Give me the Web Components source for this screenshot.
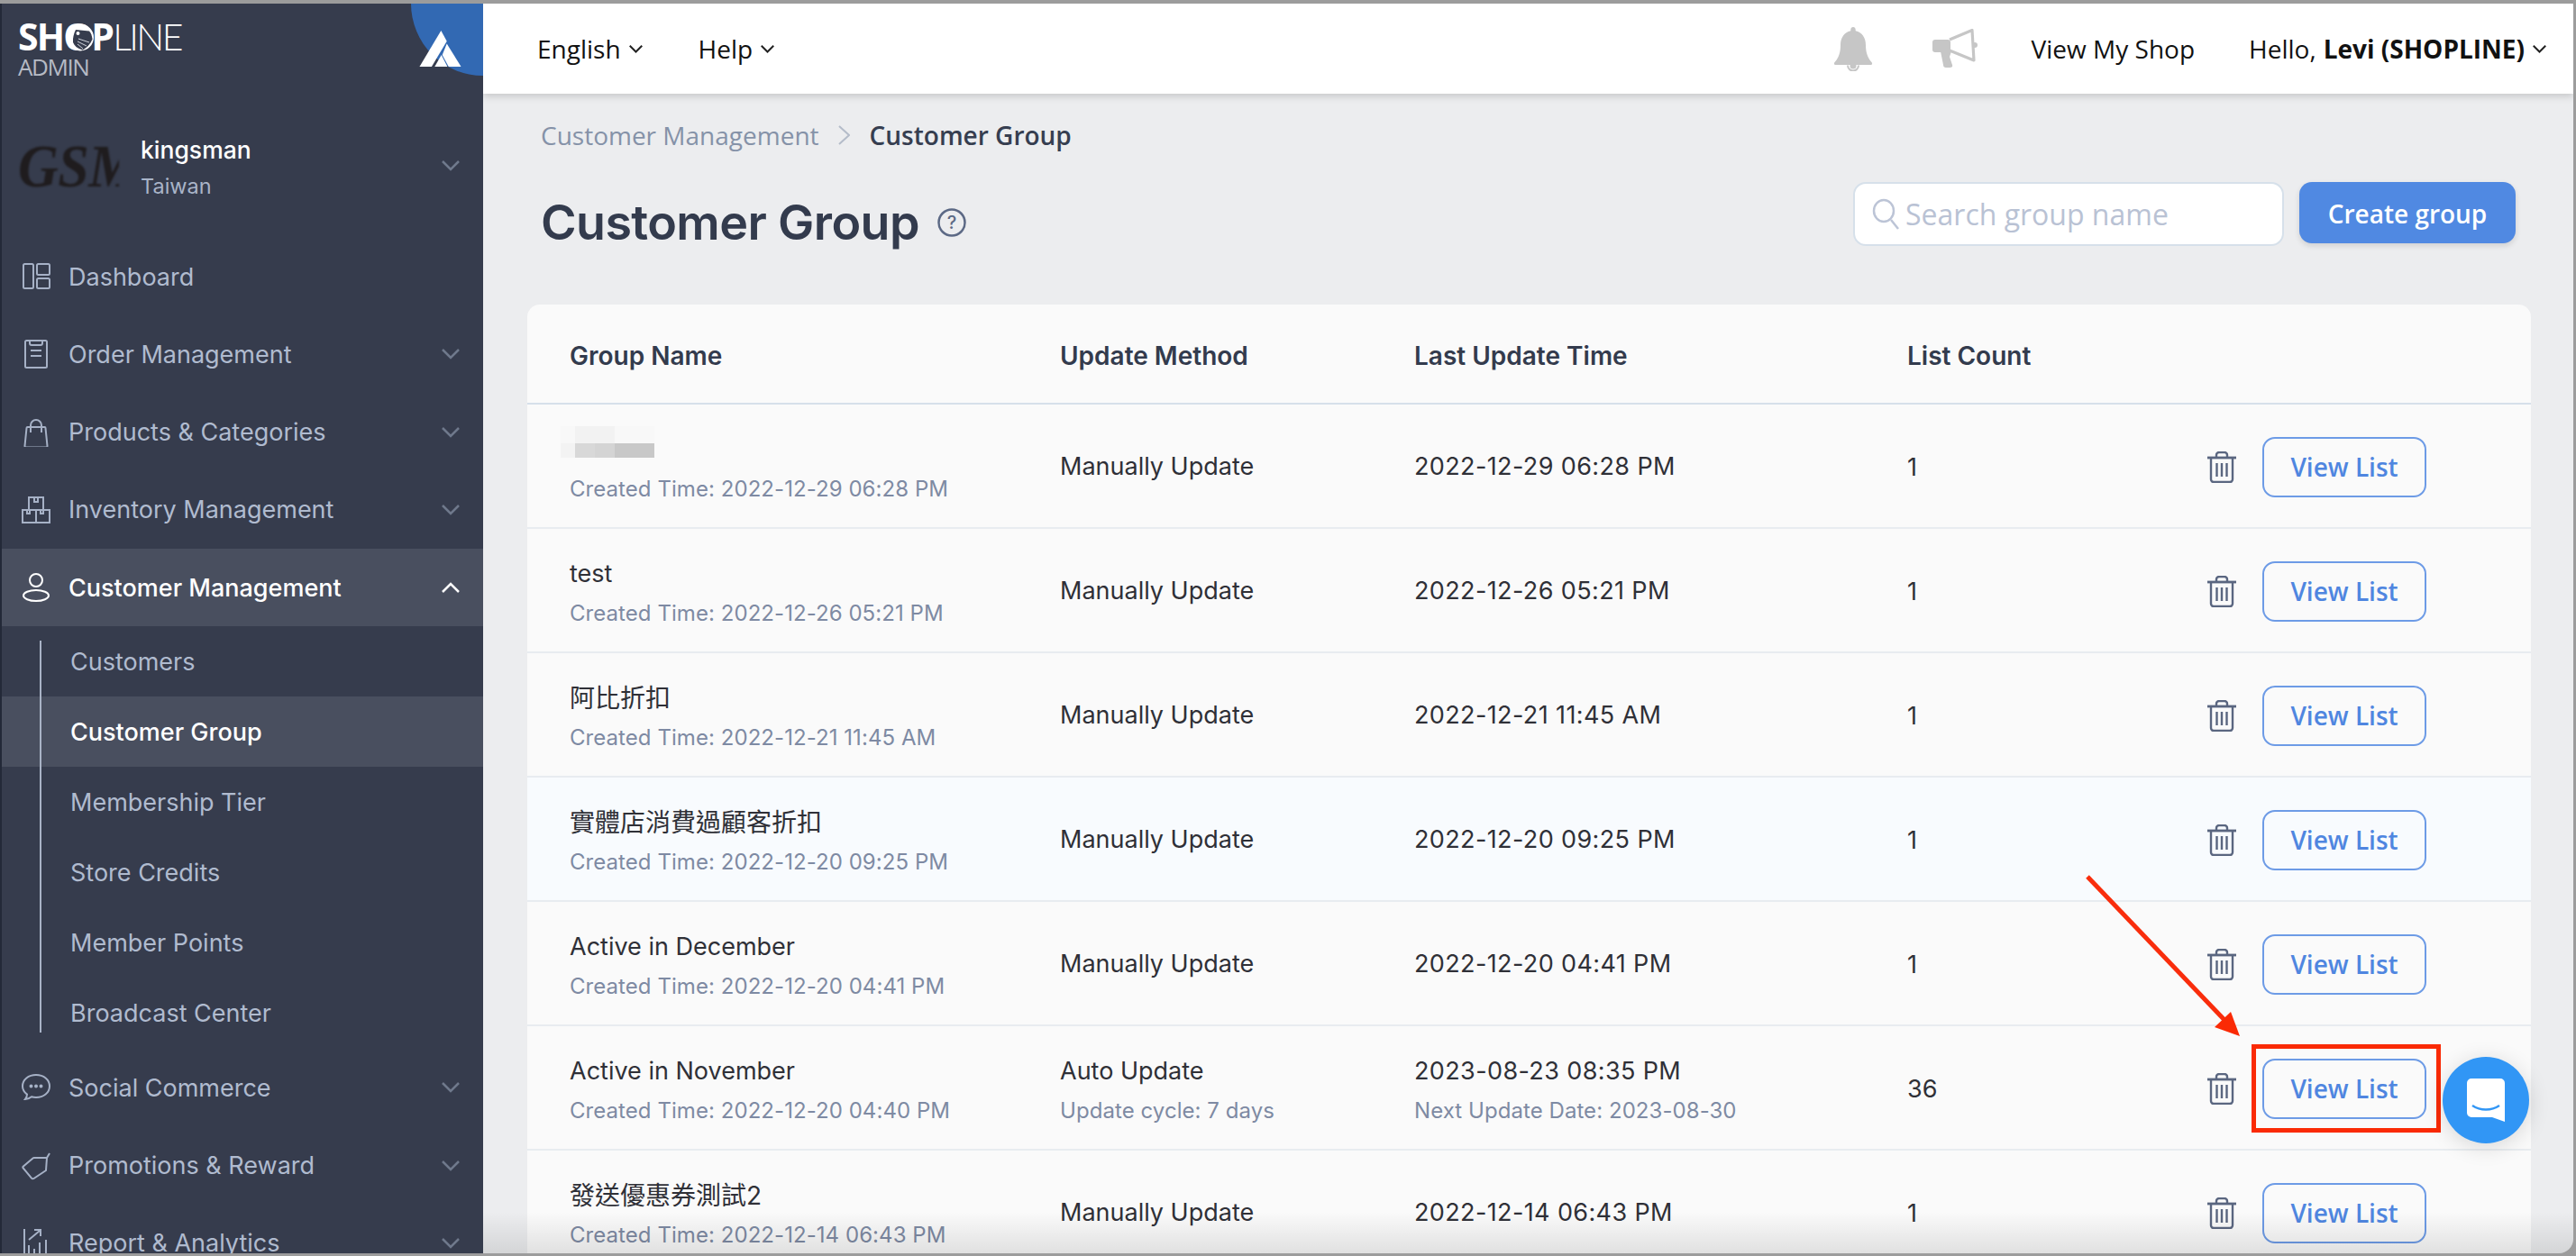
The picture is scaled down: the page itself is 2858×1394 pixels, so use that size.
<!DOCTYPE html>
<html lang="en">
<head>
<meta charset="utf-8">
<title>Customer Group</title>
<style>
  html,body{margin:0;padding:0;width:2858px;height:1394px;overflow:hidden;background:#9a9a9a;}
</style>
</head>
<body>
<app-shell>
  <side-bar slot="side">
    <side-item icon="dashboard" nochev>Dashboard</side-item>
    <side-item icon="order">Order Management</side-item>
    <side-item icon="bag">Products &amp; Categories</side-item>
    <side-item icon="box">Inventory Management</side-item>
    <side-item icon="user" open>Customer Management</side-item>
    <sub-menu>
      <sub-item>Customers</sub-item>
      <sub-item active>Customer Group</sub-item>
      <sub-item>Membership Tier</sub-item>
      <sub-item>Store Credits</sub-item>
      <sub-item>Member Points</sub-item>
      <sub-item>Broadcast Center</sub-item>
    </sub-menu>
    <side-item icon="chat">Social Commerce</side-item>
    <side-item icon="tag">Promotions &amp; Reward</side-item>
    <side-item icon="report">Report &amp; Analytics</side-item>
  </side-bar>
  <top-bar slot="top"></top-bar>
  <page-head slot="main"></page-head>
  <group-table slot="main">
    <group-row blur created="Created Time: 2022-12-29 06:28 PM" method="Manually Update" time="2022-12-29 06:28 PM" count="1"></group-row>
    <group-row name="test" created="Created Time: 2022-12-26 05:21 PM" method="Manually Update" time="2022-12-26 05:21 PM" count="1"></group-row>
    <group-row name="阿比折扣" created="Created Time: 2022-12-21 11:45 AM" method="Manually Update" time="2022-12-21 11:45 AM" count="1"></group-row>
    <group-row hl name="實體店消費過顧客折扣" created="Created Time: 2022-12-20 09:25 PM" method="Manually Update" time="2022-12-20 09:25 PM" count="1"></group-row>
    <group-row name="Active in December" created="Created Time: 2022-12-20 04:41 PM" method="Manually Update" time="2022-12-20 04:41 PM" count="1"></group-row>
    <group-row name="Active in November" created="Created Time: 2022-12-20 04:40 PM" method="Auto Update" cycle="Update cycle: 7 days" time="2023-08-23 08:35 PM" next="Next Update Date: 2023-08-30" count="36"></group-row>
    <group-row name="發送優惠券測試2" created="Created Time: 2022-12-14 06:43 PM" method="Manually Update" time="2022-12-14 06:43 PM" count="1"></group-row>
  </group-table>
  <red-callout slot="over"></red-callout>
  <chat-fab slot="over"></chat-fab>
</app-shell>

<script>
const ICONS = {
  dashboard:'<rect x="2" y="2" width="11" height="27" rx="1.5"/><rect x="17" y="2" width="14" height="12" rx="1.5"/><rect x="17" y="18" width="14" height="11" rx="1.5"/>',
  order:'<rect x="4" y="1" width="24" height="30" rx="1.5"/><path d="M9 1v3a2 2 0 0 0 2 2h10a2 2 0 0 0 2-2V1M10 12h12M10 18h12"/>',
  bag:'<path d="M7 10h18.5a1 1 0 0 1 1 1l2 20a1.5 1.5 0 0 1-1.5 1.6H5a1.5 1.5 0 0 1-1.5-1.6l2-20a1 1 0 0 1 1-1z"/><path d="M10 16V8a6 6 0 0 1 12 0v8"/>',
  box:'<rect x="8" y="2" width="16" height="14"/><rect x="1" y="16" width="15" height="14"/><rect x="16" y="16" width="15" height="14"/><path d="M14 2v5h4V2M6 16v4h3v-4M21 16v4h3v-4" />',
  user:'<circle cx="16" cy="8" r="7"/><ellipse cx="16" cy="25" rx="14" ry="6"/>',
  chat:'<path d="M16 2c8.3 0 15 5 15 12.5S24.300 27 16 27c-1.700 0-3.400-.2-5-.7C9 28 6.500 29 4 29c1.300-1.600 2-3.400 2-5.400C3 21.300 1 18.100 1 14.500 1 7 7.700 2 16 2z"/><circle cx="10.500" cy="14.500" r="1" fill="currentColor"/><circle cx="16" cy="14.500" r="1" fill="currentColor"/><circle cx="21.500" cy="14.500" r="1" fill="currentColor"/>',
  tag:'<path d="M28 7 27 21 13.500 30a2 2 0 0 1-2.500-.4L1.700 18.500a1.500 1.500 0 0 1 .2-2L12.500 7.500a2 2 0 0 1 1.300-.5z"/><path d="M28 7l3-5"/>',
  report:'<path d="M3 0v30h28"/><path d="M8 18v12M14 22v8M20 15v15M27 12v18"/><path d="M8 12 20 2M14 1h7v7"/>'
};
const sheet = (css)=>`<style>${css}</style>`;
function def(name, fn){
  customElements.define(name, class extends HTMLElement{
    constructor(){super();this.attachShadow({mode:'open'});}
    connectedCallback(){this.shadowRoot.innerHTML = fn(this);}
  });
}
const chev = (color,w=20,up=false,sw=2.5)=>`<svg width="${w}" height="${w*0.6}" viewBox="0 0 20 12" fill="none" stroke="${color}" stroke-width="${sw*20/w}" style="display:block;flex:none">${up?'<path d="M1 11 10 2l9 9"/>':'<path d="M1 1l9 9 9-9"/>'}</svg>`;

def('app-shell',()=>sheet(`
  :host{display:block;position:relative;width:2858px;height:1394px;box-sizing:border-box;background:#9c9c9c;padding:4px 3px 3px 0;overflow:hidden;}
  .win{display:grid;grid-template-columns:536px 1fr;grid-template-rows:100px 1fr;height:100%;background:#ecedef;border-bottom-right-radius:16px;overflow:hidden;position:relative;}
  .s{grid-row:1/3;display:block;min-height:0;overflow:hidden;position:relative;z-index:3;}
  .t{grid-column:2;display:block;position:relative;z-index:2;}
  .m{grid-column:2;min-height:0;overflow:hidden;padding:0 47px 0 49px;}
  .fade{position:absolute;left:536px;right:0;bottom:0;height:46px;background:linear-gradient(rgba(0,0,0,0),rgba(0,0,0,.1));pointer-events:none;z-index:4;}
`)+`<div class="win"><div class="s"><slot name="side"></slot></div><div class="t"><slot name="top"></slot></div><div class="m"><slot name="main"></slot></div><div class="fade"></div></div><slot name="over"></slot>`);

def('side-bar',()=>sheet(`
  :host{display:block;height:100%;background:#363c4d;border-left:2px solid #232938;box-sizing:border-box;font-family:Inter,"Liberation Sans",sans-serif;position:relative;}
  .logo{height:100px;box-sizing:border-box;padding:16px 0 0 18px;position:relative;overflow:hidden;}
  .sl{font:700 41px/40px "Open Sans","Liberation Sans",sans-serif;color:#fff;letter-spacing:-1.800px;white-space:nowrap;height:40px;position:relative;}
  .sl span{font-family:Lato,"Open Sans",sans-serif;font-weight:300;letter-spacing:-2.600px;}
  .ad{font:400 26px/26px "Open Sans","Liberation Sans",sans-serif;color:#b6bac4;letter-spacing:-1.400px;margin-top:1px;}
  .mark{position:absolute;left:71px;top:22px;}
  .circ{position:absolute;right:-80px;top:-80px;width:160px;height:160px;border-radius:50%;background:#3269b3;}
  .mt{position:absolute;left:463px;top:30px;}
  .co{height:160px;display:flex;align-items:center;padding:0 26px 0 18px;gap:24px;}
  .img{width:112px;height:46px;overflow:hidden;font:italic 700 62px/46px "Liberation Serif",serif;color:#1f1c1e;white-space:nowrap;flex:none;filter:blur(1px);letter-spacing:-.5px;transform:scaleY(1.100);}
  .nm{flex:1;padding-top:3px;}
  .n1{font-size:26.500px;line-height:36px;color:#fff;font-weight:500;}
  .n2{font-size:23.500px;line-height:34px;color:#a9b4c8;margin-top:6px;}
`)+`<div class="logo"><div class="circ"></div>
  <div class="sl">SHOP<span>LINE</span></div><div class="ad">ADMIN</div>
  <svg class="mark" width="32" height="31" viewBox="0 0 32 31"><circle cx="16" cy="15.500" r="15" fill="#fff"/><path d="M11 7 26 8.500c2 2 3 5 3.500 9-2 5-6 9.500-11 12C13 28 9.500 25 8 21c-.5-5 1-10 3-14z" fill="#363c4d"/><circle cx="13.500" cy="11" r="2" fill="#fff"/><path d="M14 17 26 21M13 20 23 25M13 23 19 28" stroke="#cfd3db" stroke-width="1"/></svg>
  <svg class="mt" width="47" height="40" viewBox="0 0 137 119"><path d="M71 0 0 119h40L90 35z" fill="#fff"/><path d="M90 43 137 119H96L75 80z" fill="#fff"/><path d="M72 80 50 119h42z" fill="#fff"/></svg>
  </div>
  <div class="co"><div class="img">GSM</div><div class="nm"><div class="n1">kingsman</div><div class="n2">Taiwan</div></div>${chev('#6f798c')}</div>
  <slot></slot>`);

def('side-item',(el)=>{
  const open=el.hasAttribute('open');
  const col=open?'#fff':'#b0bbcf';
  return sheet(`
  :host{display:flex;align-items:center;height:86.250px;box-sizing:border-box;padding:0 26px 0 22px;gap:20px;font-size:27px;color:${col};background:${open?'#494f5f':'transparent'};font-weight:${open?500:400};}
  svg.i{width:32px;height:32px;flex:none;}
  .l{flex:1;white-space:nowrap;}
  `)+`<svg class="i" viewBox="0 0 32 32" fill="none" stroke="${open?'#fff':'#a6b1c6'}" color="${open?'#fff':'#a6b1c6'}" stroke-width="2">${ICONS[el.getAttribute('icon')]}</svg><div class="l"><slot></slot></div>${el.hasAttribute('nochev')?'':chev(open?'#fff':'#6f798c',20,open)}`;
});

def('sub-menu',()=>sheet(`
  :host{display:block;position:relative;background:#363c4d;padding-bottom:1px;}
  .ln{position:absolute;left:42px;top:16px;bottom:18px;width:2px;background:#a9b3c6;z-index:1;}
`)+`<div class="ln"></div><slot></slot>`);

def('sub-item',(el)=>{
  const a=el.hasAttribute('active');
  return sheet(`:host{display:flex;align-items:center;height:78px;padding-left:76px;font-size:27px;color:${a?'#fff':'#b0bbcf'};font-weight:${a?500:400};background:${a?'#494f5f':'transparent'};white-space:nowrap;}`)+`<slot></slot>`;
});

def('top-bar',()=>sheet(`
  :host{display:flex;align-items:center;height:100px;background:#fff;box-shadow:0 3px 8px rgba(0,0,0,.16);font:400 28px/38px "Open Sans","Liberation Sans",sans-serif;color:#111;padding:0 30px 0 60px;box-sizing:border-box;}
  .g{display:flex;align-items:center;gap:9px;}
  .sp{flex:1;}
  b{font-weight:700;}
  .bell{margin-right:66px;}
  .meg{margin-right:60px;}
`)+`<div class="g" style="margin-right:62px">English ${chev('#222',15,false,2)}</div><div class="g">Help ${chev('#222',15,false,2)}</div><div class="sp"></div>
<svg class="bell" width="44" height="49" viewBox="0 0 44 49" fill="#c6c6c6" style="display:block"><path d="M22 0c1.500 0 2.700 1.200 2.700 2.700v1.600C32 6 36 12 36 20c0 8 2 14 6 18.500 1.500 1.500 1.500 3 0 3.500H2c-1.500-.5-1.500-2 0-3.500C6 34 8 28 8 20 8 12 12 6 19.300 4.300V2.700C19.300 1.200 20.500 0 22 0z"/><path d="M16 42.500a6 6 0 0 0 12 0" fill="none" stroke="#c6c6c6" stroke-width="2"/><circle cx="22" cy="43" r="3.500"/></svg>
<svg class="meg" width="50" height="44" viewBox="0 0 50 44" style="display:block"><rect x="0" y="12" width="20" height="14" rx="3" fill="#c6c6c6"/><path d="M19 12 44 1.500 46 35 19 24" fill="none" stroke="#c6c6c6" stroke-width="3.200" stroke-linejoin="round"/><circle cx="47" cy="18" r="3" fill="#c6c6c6"/><path d="M9 25h12l-2 6 3 9q1 3-3 3h-4q-3 0-3-3z" fill="#c6c6c6"/></svg>
<div style="margin-right:60px">View My Shop</div><div class="g">Hello, <b style="margin-left:-1px">Levi (SHOPLINE)</b> ${chev('#222',15,false,2)}</div>`);

def('page-head',()=>sheet(`
  :host{display:block;padding:26px 17px 0 15px;}
  .bc{display:flex;align-items:center;height:40px;font:400 28px/40px "Open Sans","Liberation Sans",sans-serif;color:#8592a8;white-space:nowrap;}
  .bc b{font-weight:600;color:#363e50;}
  .bc svg{margin:0 21.500px;}
  .row{display:flex;margin-top:32px;height:136px;box-sizing:border-box;padding-bottom:46px;}
  h1{margin:0;font:600 53.800px/90px Inter,"Liberation Sans",sans-serif;color:#333b4d;white-space:nowrap;letter-spacing:-.6px;}
  .q{margin:29px 0 0 20px;flex:none;}
  .sp{flex:1;}
  .search{width:478px;height:71px;box-sizing:border-box;background:#fff;border:2px solid #d6e0ea;border-radius:14px;display:flex;align-items:center;padding-left:19px;gap:7px;font:400 32px/1 "Open Sans","Liberation Sans",sans-serif;color:#b9c2d4;white-space:nowrap;}
  .btn{width:240px;height:68px;margin-left:17px;background:#5089e2;border-radius:14px;color:#fff;font:600 28px/70px "Open Sans","Liberation Sans",sans-serif;text-align:center;box-shadow:0 3px 6px rgba(0,0,0,.12);}
`)+`<div class="bc"><span>Customer Management</span><svg width="13" height="22" viewBox="0 0 13 22" fill="none" stroke="#b4bcc9" stroke-width="2"><path d="M1 1l11 10L1 21"/></svg><b>Customer Group</b></div>
<div class="row"><h1>Customer Group</h1><svg class="q" width="32" height="32" viewBox="0 0 32 32"><circle cx="16" cy="16" r="14.500" fill="none" stroke="#5c6985" stroke-width="2.500"/><text x="16" y="23" font-family="Inter,sans-serif" font-size="20" font-weight="500" text-anchor="middle" fill="#5c6985">?</text></svg><div class="sp"></div>
<div class="search"><svg width="30" height="36" viewBox="0 0 30 36" fill="none" stroke="#bcc4d6" stroke-width="2.500" style="flex:none"><ellipse cx="13" cy="14" rx="11" ry="12"/><path d="M21 24l8 10"/></svg><span>Search group name</span></div>
<div class="btn">Create group</div></div>`);

const COLS='grid-template-columns:544px 393px 547px 1fr;';
def('group-table',()=>sheet(`
  :host{display:block;background:#fafafa;border-radius:14px 14px 0 0;font-family:Inter,"Noto Sans CJK TC",sans-serif;}
  .h{display:grid;${COLS}align-items:center;height:111px;box-sizing:border-box;padding:4px 0 0 47px;border-bottom:2px solid #d6e0ea;font-size:28px;font-weight:600;color:#333b4d;white-space:nowrap;}
`)+`<div class="h"><div>Group Name</div><div>Update Method</div><div>Last Update Time</div><div>List Count</div></div><slot></slot>`);

def('group-row',(el)=>{
  const a=n=>el.getAttribute(n);
  const two=(t,s,c='')=>s?`<div class="two"><div class="p ${c}">${t}</div><div class="s">${s}</div></div>`:`<div class="p ${c}">${t}</div>`;
  const nm=a('name')||'';
  const blur=`<div class="blur"><i style="background:#f8f8f8"></i><i style="background:#f2f2f2"></i><i style="background:#f8f8f8"></i><i style="background:#f3f3f3"></i><i style="background:#d8d8d8"></i><i style="background:#d4d4d4"></i><i style="background:#c8c8c8"></i></div>`;
  return sheet(`
  :host{display:grid;${COLS}align-items:center;height:138px;box-sizing:border-box;padding:2px 0 0 47px;border-bottom:2px solid #e8ecf0;background:${el.hasAttribute('hl')?'#f8fbfe':'transparent'};color:#2f3037;white-space:nowrap;font-size:27px;}
  .two{display:flex;flex-direction:column;gap:8px;margin-top:3px;}
  .p{line-height:38px;}
  .cjk{font-size:28px;}
  .tm{letter-spacing:.38px;}
  .s{line-height:34px;font-size:24px;letter-spacing:.06px;color:#7e8aa3;}
  .a{display:flex;align-items:center;}
  .sp{flex:1;}
  .act{display:flex;align-items:center;gap:29px;margin-right:116px;}
  .blur{display:grid;grid-template-columns:16px 22px 22px 44px;grid-template-rows:19px 16px;width:104px;height:35px;margin:-7px 0 10px -10px;}
  .blur i{display:block;}
  .blur i:nth-child(1){grid-area:1/1}.blur i:nth-child(2){grid-area:1/2/1/4}.blur i:nth-child(3){grid-area:1/4}
  .blur i:nth-child(4){grid-area:2/1}.blur i:nth-child(5){grid-area:2/2/2/3}.blur i:nth-child(6){grid-area:2/3}.blur i:nth-child(7){grid-area:2/4}
  `)+`<div>${el.hasAttribute('blur')?`<div class="two">${blur}<div class="s">${a('created')}</div></div>`:two(nm,a('created'),/[^\x00-\x7f]/.test(nm)?'cjk':'')}</div>
  <div>${two(a('method'),a('cycle'))}</div><div>${two(a('time'),a('next'),'tm')}</div>
  <div class="a"><div>${a('count')}</div><div class="sp"></div><div class="act"><trash-icon></trash-icon><view-btn>View List</view-btn></div></div>`;
});

def('trash-icon',()=>sheet(`:host{display:block;width:32px;height:35px;}`)+`<svg width="32" height="35" viewBox="0 0 32 35" fill="none" stroke="#5a6680" stroke-width="2.400" style="display:block"><path d="M0 7h32" stroke-width="2.800"/><path d="M10 7V4a3 3 0 0 1 3-3h6a3 3 0 0 1 3 3v3"/><path d="M4 7v24a3 3 0 0 0 3 3h18a3 3 0 0 0 3-3V7"/><path d="M10.500 13v15M16 13v15M21.500 13v15"/></svg>`);

def('view-btn',()=>sheet(`:host{display:block;width:182px;height:67px;box-sizing:border-box;border:2px solid #6d9be6;border-radius:14px;color:#4f86e0;font:600 28px/63px "Open Sans","Liberation Sans",sans-serif;text-align:center;}`)+`<slot></slot>`);

def('red-callout',()=>sheet(`
  :host{display:block;position:absolute;left:2300px;top:960px;width:420px;height:310px;pointer-events:none;z-index:8;}
  .box{position:absolute;left:198px;top:199px;width:210px;height:98px;box-sizing:border-box;border:5px solid #fa2a05;}
  svg{position:absolute;left:0;top:0;}
`)+`<svg width="420" height="310" viewBox="0 0 420 310"><path d="M16 13 168 172" stroke="#f92d0c" stroke-width="5" fill="none"/><path d="M185 190 157 180 175 163z" fill="#fa2a05"/></svg><div class="box"></div>`);

def('chat-fab',()=>sheet(`
  :host{display:block;position:absolute;left:2710px;top:1173px;width:96px;height:96px;border-radius:50%;background:#3196f5;box-shadow:0 4px 24px rgba(0,0,0,.14);z-index:9;}
  svg{position:absolute;left:27px;top:24px;}
`)+`<svg width="42" height="48" viewBox="0 0 42 48"><path d="M5 0h32a5 5 0 0 1 5 5v43l-14-5H5a5 5 0 0 1-5-5V5a5 5 0 0 1 5-5z" fill="#fff"/><path d="M6 30c9 6 21 6 30 0" fill="none" stroke="#3196f5" stroke-width="2.500"/></svg>`);
</script>
</body>
</html>
